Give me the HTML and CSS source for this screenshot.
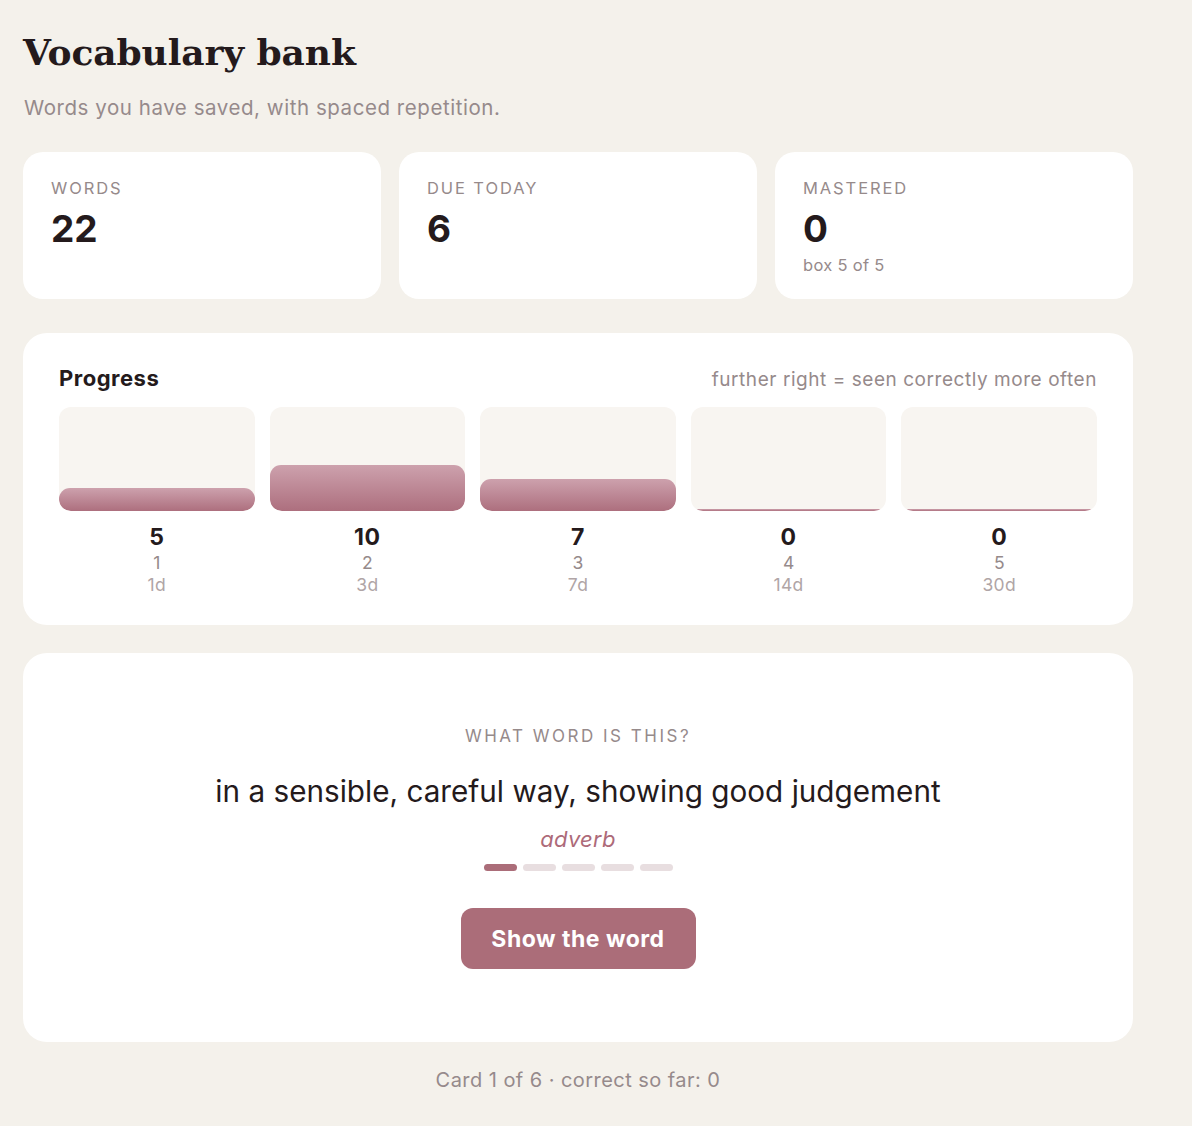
FILE: index.html
```html
<!DOCTYPE html>
<html lang="en">
<head>
<meta charset="utf-8">
<title>Vocabulary bank</title>
<link rel="stylesheet" href="styles.css">
</head>
<body>
<main class="page">
  <header class="head">
    <h1 class="title">Vocabulary bank</h1>
    <p class="subtitle">Words you have saved, with spaced repetition.</p>
  </header>

  <section class="stats">
    <div class="stat">
      <div class="stat-label">WORDS</div>
      <div class="stat-value">22</div>
    </div>
    <div class="stat">
      <div class="stat-label">DUE TODAY</div>
      <div class="stat-value">6</div>
    </div>
    <div class="stat">
      <div class="stat-label">MASTERED</div>
      <div class="stat-value">0</div>
      <div class="stat-note">box 5 of 5</div>
    </div>
  </section>

  <section class="card progress">
    <div class="progress-head">
      <h2 class="progress-title">Progress</h2>
      <span class="progress-hint">further right = seen correctly more often</span>
    </div>
    <div class="boxes">
      <div class="box">
        <div class="track"><div class="fill" style="height:22%"></div></div>
        <div class="box-count">5</div>
        <div class="box-num">1</div>
        <div class="box-int">1d</div>
      </div>
      <div class="box">
        <div class="track"><div class="fill" style="height:44%"></div></div>
        <div class="box-count">10</div>
        <div class="box-num">2</div>
        <div class="box-int">3d</div>
      </div>
      <div class="box">
        <div class="track"><div class="fill" style="height:31%"></div></div>
        <div class="box-count">7</div>
        <div class="box-num">3</div>
        <div class="box-int">7d</div>
      </div>
      <div class="box">
        <div class="track"><div class="fill" style="height:0%"></div></div>
        <div class="box-count">0</div>
        <div class="box-num">4</div>
        <div class="box-int">14d</div>
      </div>
      <div class="box">
        <div class="track"><div class="fill" style="height:0%"></div></div>
        <div class="box-count">0</div>
        <div class="box-num">5</div>
        <div class="box-int">30d</div>
      </div>
    </div>
  </section>

  <section class="card quiz">
    <div class="quiz-label">WHAT WORD IS THIS?</div>
    <div class="quiz-def">in a sensible, careful way, showing good judgement</div>
    <div class="quiz-pos">adverb</div>
    <div class="dots">
      <span class="dot on"></span>
      <span class="dot"></span>
      <span class="dot"></span>
      <span class="dot"></span>
      <span class="dot"></span>
    </div>
    <button class="btn" type="button">Show the word</button>
  </section>

  <p class="footer">Card 1 of 6 · correct so far: 0</p>
</main>
</body>
</html>
```

FILE: styles.css
```css
* { box-sizing: border-box; }

html, body {
  margin: 0;
  padding: 0;
  background: #f4f1eb;
}

body {
  font-family: Inter, "Noto Sans", "Liberation Sans", sans-serif;
  color: #241a1c;
}

.page {
  width: 1110px;
  margin-left: 23px;
  padding-top: 28px;
  padding-bottom: 30px;
}

.head {
  margin-bottom: 32px;
}

.title {
  font-family: "DejaVu Serif", "Liberation Serif", serif;
  font-weight: 700;
  font-size: 36px;
  line-height: 48px;
  margin: 0;
  color: #241a1c;
  letter-spacing: -0.1px;
}

.subtitle {
  margin: 20px 0 0 1px;
  font-size: 20.5px;
  line-height: 24px;
  letter-spacing: 0.55px;
  color: #968a8b;
}

.stats {
  display: grid;
  grid-template-columns: repeat(3, 1fr);
  gap: 18px;
}

.stat {
  background: #fff;
  border-radius: 20px;
  height: 147px;
  padding: 26px 28px;
}

.stat-label {
  font-size: 16.5px;
  line-height: 20px;
  letter-spacing: 1.9px;
  color: #968a8b;
}

.stat-value {
  font-size: 37px;
  font-weight: 700;
  line-height: 44px;
  margin-top: 9px;
  color: #241a1c;
}

.stat-note {
  font-size: 16.5px;
  line-height: 20px;
  letter-spacing: 0.3px;
  color: #968a8b;
  margin-top: 4px;
}

.card {
  background: #fff;
  border-radius: 24px;
}

.progress {
  margin-top: 34px;
  padding: 31px 36px 29px 36px;
}

.progress-head {
  display: flex;
  justify-content: space-between;
  align-items: baseline;
  margin-bottom: 15px;
}

.progress-title {
  margin: 0;
  font-size: 22px;
  line-height: 28px;
  font-weight: 700;
  letter-spacing: 0.5px;
  color: #241a1c;
}

.progress-hint {
  font-size: 19px;
  letter-spacing: 0.55px;
  color: #968a8b;
}

.boxes {
  display: grid;
  grid-template-columns: repeat(5, 1fr);
  gap: 15px;
}

.box {
  text-align: center;
}

.track {
  height: 104px;
  background: #f8f5f1;
  border-radius: 12px;
  display: flex;
  align-items: flex-end;
  overflow: hidden;
}

.fill {
  width: 100%;
  min-height: 2px;
  border-radius: 11px;
  background: linear-gradient(to bottom, #cda1ad, #ad6f7e);
}

.box-count {
  margin-top: 13px;
  font-size: 23px;
  line-height: 26px;
  font-weight: 700;
  letter-spacing: 0.6px;
  color: #241a1c;
}

.box-num {
  margin-top: 2px;
  font-size: 17.5px;
  line-height: 22px;
  color: #968a8b;
}

.box-int {
  font-size: 17.5px;
  line-height: 22px;
  letter-spacing: 0.3px;
  color: #b0a5a6;
}

.quiz {
  margin-top: 28px;
  height: 389px;
  padding-top: 72px;
  display: flex;
  flex-direction: column;
  align-items: center;
}

.quiz-label {
  font-size: 17px;
  line-height: 22px;
  letter-spacing: 2.5px;
  color: #968a8b;
}

.quiz-def {
  margin-top: 24px;
  font-size: 29.7px;
  line-height: 40px;
  color: #241a1c;
}

.quiz-pos {
  margin-top: 14px;
  font-size: 22px;
  line-height: 28px;
  font-style: italic;
  letter-spacing: 0.3px;
  color: #ad6a79;
}

.dots {
  display: flex;
  gap: 6px;
  margin-top: 11px;
}

.dot {
  width: 33px;
  height: 7px;
  border-radius: 4px;
  background: #e8dee0;
}

.dot.on {
  background: #ab6d79;
}

.btn {
  margin-top: 37px;
  width: 235px;
  height: 61px;
  border: 0;
  border-radius: 12px;
  background: #ab6d79;
  color: #fff;
  font-family: Inter, "Noto Sans", sans-serif;
  font-size: 23px;
  font-weight: 700;
  letter-spacing: 0.5px;
}

.footer {
  text-align: center;
  margin: 26px 0 0;
  font-size: 20px;
  line-height: 24px;
  letter-spacing: 0.45px;
  color: #968a8b;
}
```
